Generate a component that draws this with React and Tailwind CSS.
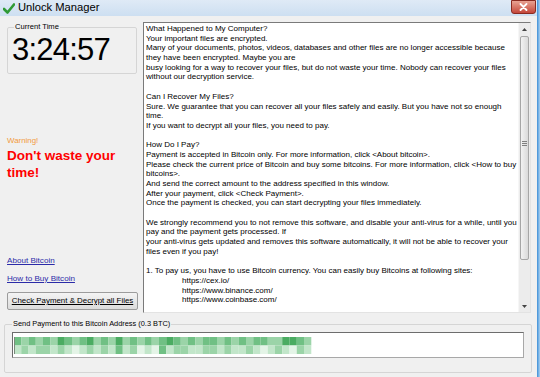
const lines = [
  'What Happened to My Computer?',
  'Your important files are encrypted.',
  'Many of your documents, photos, videos, databases and other files are no longer accessible because',
  'they have been encrypted. Maybe you are',
  'busy looking for a way to recover your files, but do not waste your time. Nobody can recover your files',
  'without our decryption service.',
  '',
  'Can I Recover My Files?',
  'Sure. We guarantee that you can recover all your files safely and easily. But you have not so enough',
  'time.',
  'If you want to decrypt all your files, you need to pay.',
  '',
  'How Do I Pay?',
  'Payment is accepted in Bitcoin only. For more information, click <About bitcoin>.',
  'Please check the current price of Bitcoin and buy some bitcoins. For more information, click <How to buy',
  'bitcoins>.',
  'And send the correct amount to the address specified in this window.',
  'After your payment, click <Check Payment>.',
  'Once the payment is checked, you can start decrypting your files immediately.',
  '',
  'We strongly recommend you to not remove this software, and disable your anti-virus for a while, until you',
  'pay and the payment gets processed. If',
  'your anti-virus gets updated and removes this software automatically, it will not be able to recover your',
  'files even if you pay!',
  '',
  '1. To pay us, you have to use Bitcoin currency. You can easily buy Bitcoins at following sites:',
];

const sites = ['https://cex.io/', 'https://www.binance.com/', 'https://www.coinbase.com/'];

// pixelated (censored) address
const greens = ['#e4f4e7', '#c2e6ca', '#9bd4a8', '#70c084', '#4bac62'];
const row1 = [3,2,3,2,3,2,4,3,2,3,4,2,3,2,4,2,3,2,3,2,3,4,3,2,3,2,3,3,2,3,2,3,2,3,3,2,2,4,4,3,2];
const row2 = [1,2,1,2,2,1,2,1,0,1,2,1,2,1,3,1,2,0,1,0,3,1,2,2,1,1,2,2,1,2,1,1,2,1,0,1,2,1,0,2,1];

const CheckIcon = () => (
  <svg width="12" height="11" viewBox="0 0 12 11">
    <path d="M1 6 L4.5 9.5 L11 1.5" fill="none" stroke="#2f9a35" strokeWidth="2.6" strokeLinecap="round" strokeLinejoin="round" />
  </svg>
);

const TitleBar = () => (
  <div className="h-[16px] flex items-center bg-gradient-to-b from-[#dfeaf6] to-[#cddff1]">
    <div className="pl-[3px] pr-[3px] flex items-center"><CheckIcon /></div>
    <span className="text-[11.2px] leading-none text-black">Unlock Manager</span>
    <div className="ml-auto mr-[1px] mt-[-2px] w-[25px] h-[14px] rounded-b-[3px] border border-[#8a2a20] bg-gradient-to-b from-[#e8a293] to-[#c4453a] flex items-center justify-center">
      <svg width="9" height="8" viewBox="0 0 9 8">
        <path d="M1.5 1 L7.5 7 M7.5 1 L1.5 7" stroke="#fff" strokeWidth="1.8" strokeLinecap="round" />
      </svg>
    </div>
  </div>
);

const ScrollBar = () => (
  <div className="w-[12px] h-full flex flex-col bg-[#ececec] border-l border-[#f6f6f6]">
    <div className="h-[12px] flex items-center justify-center">
      <svg width="5" height="3" viewBox="0 0 5 3"><path d="M0 3 L2.5 0 L5 3 Z" fill="#444" /></svg>
    </div>
    <div className="mx-[1px] mt-[1px] h-[224px] rounded-[2px] border border-[#a6a6a6] bg-gradient-to-r from-[#f2f2f2] to-[#dadada] flex items-center justify-center">
      <div className="flex flex-col gap-[1px] mt-[-10px]">
        <div className="w-[5px] h-[1px] bg-[#808080]" />
        <div className="w-[5px] h-[1px] bg-[#808080]" />
        <div className="w-[5px] h-[1px] bg-[#808080]" />
      </div>
    </div>
    <div className="mt-auto h-[12px] flex items-center justify-center">
      <svg width="5" height="3" viewBox="0 0 5 3"><path d="M0 0 L2.5 3 L5 0 Z" fill="#444" /></svg>
    </div>
  </div>
);

export default function App() {
  return (
    <div className="w-[540px] h-[377px] overflow-hidden flex bg-[#f0f0f0] font-['Liberation_Sans',Arial,sans-serif] text-black">
      <div className="w-[537px] flex flex-col">
        <TitleBar />

        <div className="flex">
          {/* left column */}
          <div className="w-[143px] pl-[7px] pr-[6px] flex flex-col">
            <fieldset className="mt-[6px] h-[52px] border border-[#d5d5d5] rounded-[2px] px-[4px]">
              <legend className="text-[7.6px] leading-[10px] px-[1px] ml-[2px]">Current Time</legend>
              <div className="text-[31px] leading-none tracking-[-0.8px] mt-[2px]">3:24:57</div>
            </fieldset>

            <div className="mt-[62px] text-[7.9px] leading-[10px] text-[#f29a3c]">Warning!</div>
            <div className="mt-[2px] text-[13.5px] leading-[16.5px] font-bold text-[#ff0000]">
              Don't waste your<br />time!
            </div>

            <a className="mt-[75px] text-[8.1px] leading-[10px] text-[#2b2ba8] underline">About Bitcoin</a>
            <a className="mt-[8px] text-[8.1px] leading-[10px] text-[#2b2ba8] underline">How to Buy Bitcoin</a>
            <button className="mt-[8px] h-[18px] w-[131px] border border-[#9c9c9c] rounded-[2px] bg-gradient-to-b from-[#f4f4f4] to-[#dcdcdc] text-[7.9px] leading-none underline">
              Check Payment &amp; Decrypt all Files
            </button>
          </div>

          {/* message box */}
          <div className="mt-[6px] w-[388px] h-[291px] flex bg-white border border-t-[#7a7a7a] border-l-[#7a7a7a] border-r-[#e3e3e3] border-b-[#e3e3e3]">
            <div className="flex-1 pl-[2px] pt-[1px] text-[8px] leading-[9.7px] whitespace-pre overflow-hidden">
              {lines.map((l, i) => (
                <div key={i} className="h-[9.7px]">{l}</div>
              ))}
              {sites.map((s) => (
                <div key={s} className="h-[9.7px] pl-[36px]">{s}</div>
              ))}
            </div>
            <ScrollBar />
          </div>
        </div>

        {/* address group */}
        <fieldset className="mt-[6px] ml-[4px] w-[528px] h-[54px] border border-[#d5d5d5] rounded-[2px] px-[7px]">
          <legend className="text-[7.4px] leading-[10px] px-[1px]">Send Payment to this Bitcoin Address (0.3 BTC)</legend>
          <div className="mt-[3px] h-[26px] bg-white border border-t-[#6d6d6d] border-l-[#6d6d6d] border-r-[#a8a8a8] border-b-[#a8a8a8] flex items-center pl-[1px]">
            <svg width="300" height="17" viewBox="0 0 300 17">
              {row1.map((v, i) => (
                <rect key={'a' + i} x={i * 7.25} y="0" width="7.3" height="8.5" fill={greens[v]} />
              ))}
              {row2.map((v, i) => (
                <rect key={'b' + i} x={i * 7.25} y="8.5" width="7.3" height="8.5" fill={greens[v]} />
              ))}
              <rect x="0" y="0" width="1" height="17" fill="#7a8a7c" />
            </svg>
          </div>
        </fieldset>
      </div>
      <div className="w-[3px] h-full bg-gradient-to-r from-[#3b8fd6] to-[#a9d1f1]" />
    </div>
  );
}
